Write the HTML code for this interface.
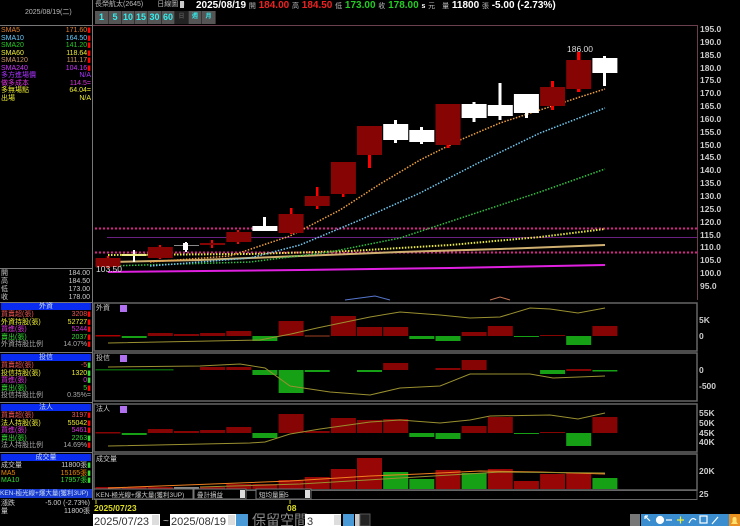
<!DOCTYPE html><html><head><meta charset="utf-8"><style>
body{margin:0;width:740px;height:526px;background:#000;overflow:hidden;position:relative;font-family:"Liberation Sans","Noto Sans CJK TC",sans-serif}
.t{position:absolute;white-space:nowrap;font-size:7px;line-height:8px}
.r{text-align:right}
.hdr{position:absolute;left:1px;width:90px;height:7px;background:#0a2cf0;color:#cde;font-size:7px;line-height:7px;text-align:center}
.btn{position:absolute;top:11px;height:13px;background:#555;color:#3ee;font-size:9px;font-weight:bold;line-height:13px;text-align:center;border-right:1px solid #333}
</style></head><body>
<!-- left panel -->
<div class="t" style="left:25px;top:9px;color:#bbb">2025/08/19(二)</div>
<div style="position:absolute;left:0;top:25px;width:92px;height:1px;background:#777"></div>
<div style="position:absolute;left:92px;top:0;width:1px;height:500px;background:#777"></div>
<div class="t" style="left:1px;top:27px;color:#e08030;line-height:7.5px">SMA5<br><span style="color:#6cf">SMA10</span><br><span style="color:#2c2">SMA20</span><br><span style="color:#ee3">SMA60</span><br><span style="color:#c96">SMA120</span><br><span style="color:#c3f">SMA240</span><br><span style="color:#a3f">多方進場價</span><br><span style="color:#d3d">做多成本</span><br><span style="color:#ee3">多無場點</span><br><span style="color:#ee3">出場</span></div>
<div class="t r" style="left:40px;width:51px;top:27px;color:#e08030;line-height:7.5px">171.60<span style="color:#f00">▮</span><br><span style="color:#6cf">164.50<span style="color:#f00">▮</span></span><br><span style="color:#2c2">141.20<span style="color:#f00">▮</span></span><br><span style="color:#ee3">118.64<span style="color:#f00">▮</span></span><br><span style="color:#c96">111.17<span style="color:#f00">▮</span></span><br><span style="color:#c3f">104.16<span style="color:#f00">▮</span></span><br><span style="color:#a3f">N/A</span><br><span style="color:#d3d">114.5=</span><br><span style="color:#ee3">64.04=</span><br><span style="color:#ee3">N/A</span></div>
<div style="position:absolute;left:0;top:268px;width:92px;height:1px;background:#777"></div>
<div class="t" style="left:1px;top:270px;color:#ccc;line-height:8px">開<br>高<br>低<br>收</div>
<div class="t r" style="left:40px;width:50px;top:270px;color:#ccc;line-height:8px">184.00<br>184.50<br>173.00<br>178.00</div>
<div style="position:absolute;left:0;top:302px;width:92px;height:1px;background:#777"></div>
<div class="hdr" style="top:303px">外資</div>
<div class="t" style="left:1px;top:311px;line-height:7.5px;color:#e55">買賣超(張)<br><span style="color:#ee3">外資持股(張)</span><br><span style="color:#d3d">買進(張)</span><br><span style="color:#3d3">賣出(張)</span><br><span style="color:#aaa">外資持股比例</span></div>
<div class="t r" style="left:40px;width:51px;top:311px;line-height:7.5px;color:#e55">3208<span style="color:#f00">▮</span><br><span style="color:#ee3">52727<span style="color:#f00">▮</span></span><br><span style="color:#d3d">5244<span style="color:#f00">▮</span></span><br><span style="color:#3d3">2037<span style="color:#f00">▮</span></span><br><span style="color:#aaa">14.07%<span style="color:#f00">▮</span></span></div>
<div style="position:absolute;left:0;top:352px;width:92px;height:1px;background:#777"></div>
<div class="hdr" style="top:354px">投信</div>
<div class="t" style="left:1px;top:362px;line-height:7.5px;color:#e55">買賣超(張)<br><span style="color:#ee3">投信持股(張)</span><br><span style="color:#d3d">買進(張)</span><br><span style="color:#3d3">賣出(張)</span><br><span style="color:#aaa">投信持股比例</span></div>
<div class="t r" style="left:40px;width:51px;top:362px;line-height:7.5px;color:#e55">-5<span style="color:#3d3">▮</span><br><span style="color:#ee3">1320<span style="color:#3d3">▮</span></span><br><span style="color:#d3d">0<span style="color:#3d3">▮</span></span><br><span style="color:#3d3">5<span style="color:#f00">▮</span></span><br><span style="color:#aaa">0.35%=</span></div>
<div style="position:absolute;left:0;top:402px;width:92px;height:1px;background:#777"></div>
<div class="hdr" style="top:404px">法人</div>
<div class="t" style="left:1px;top:412px;line-height:7.5px;color:#e55">買賣超(張)<br><span style="color:#ee3">法人持股(張)</span><br><span style="color:#d3d">買進(張)</span><br><span style="color:#3d3">賣出(張)</span><br><span style="color:#aaa">法人持股比例</span></div>
<div class="t r" style="left:40px;width:51px;top:412px;line-height:7.5px;color:#e55">3197<span style="color:#f00">▮</span><br><span style="color:#ee3">55042<span style="color:#f00">▮</span></span><br><span style="color:#d3d">5461<span style="color:#f00">▮</span></span><br><span style="color:#3d3">2263<span style="color:#3d3">▮</span></span><br><span style="color:#aaa">14.69%<span style="color:#f00">▮</span></span></div>
<div style="position:absolute;left:0;top:452px;width:92px;height:1px;background:#777"></div>
<div class="hdr" style="top:454px">成交量</div>
<div class="t" style="left:1px;top:462px;line-height:7.5px;color:#ccc">成交量<br><span style="color:#e80">MA5</span><br><span style="color:#3d3">MA10</span></div>
<div class="t r" style="left:40px;width:51px;top:462px;line-height:7.5px;color:#ccc">11800張<span style="color:#3d3">▮</span><br><span style="color:#e80">15165張<span style="color:#3d3">▮</span></span><br><span style="color:#3d3">17957張<span style="color:#3d3">▮</span></span></div>
<div class="t" style="left:0;top:489px;width:92px;height:9px;background:#1438d0;color:#cde;font-size:6.5px;line-height:9px">KEN-極光線+爆大量(獲利3UP)</div>
<div class="t" style="left:1px;top:500px;color:#ccc;line-height:8px">漲跌<br>量</div>
<div class="t r" style="left:30px;width:60px;top:500px;color:#ccc;line-height:8px">-5.00 (-2.73%)<br>11800張</div>

<!-- top header -->
<div class="t" style="left:95px;top:1px;color:#bbb;font-size:7px">長榮航太(2645)　　日線圖 <span style="background:#ccc;color:#ccc">■</span></div>
<div class="t" style="left:196px;top:0;font-size:10px;line-height:11px;font-weight:bold;color:#fff">2025/08/19 <span style="font-size:7px;color:#bbb;font-weight:normal">開</span> <span style="color:#e22">184.00</span> <span style="font-size:7px;color:#bbb;font-weight:normal">高</span> <span style="color:#e22">184.50</span> <span style="font-size:7px;color:#bbb;font-weight:normal">低</span> <span style="color:#2c2">173.00</span> <span style="font-size:7px;color:#bbb;font-weight:normal">收</span> <span style="color:#2c2">178.00</span> <span style="font-size:7px">s</span> <span style="font-size:7px;color:#bbb;font-weight:normal">元　量</span> 11800 <span style="font-size:7px;color:#bbb;font-weight:normal">張</span> -5.00 (-2.73%)</div>
<div class="btn" style="left:95px;width:13px">1</div><div class="btn" style="left:109px;width:12px">5</div><div class="btn" style="left:122px;width:12px">10</div><div class="btn" style="left:135px;width:12px">15</div><div class="btn" style="left:148px;width:13px">30</div><div class="btn" style="left:162px;width:12px">60</div><div class="btn" style="left:175px;width:13px;background:#222;color:#555;font-size:6px">日</div><div class="btn" style="left:189px;width:12px;font-size:6px">週</div><div class="btn" style="left:202px;width:13px;font-size:6px">月</div>

<svg width="740" height="526" style="position:absolute;left:0;top:0" font-family="Liberation Sans" >
<g stroke="#6a4050" fill="none"><path d="M93 25.5H697.5V300"/></g>
<g fill="#ccc" font-size="8.5" font-weight="bold">
<text x="700" y="32">195.0</text><text x="700" y="45">190.0</text><text x="700" y="58">185.0</text><text x="700" y="71">180.0</text><text x="700" y="83">175.0</text><text x="700" y="96">170.0</text><text x="700" y="109">165.0</text><text x="700" y="122">160.0</text><text x="700" y="135">155.0</text><text x="700" y="148">150.0</text><text x="700" y="160">145.0</text><text x="700" y="173">140.0</text><text x="700" y="186">135.0</text><text x="700" y="199">130.0</text><text x="700" y="212">125.0</text><text x="700" y="225">120.0</text><text x="700" y="238">115.0</text><text x="700" y="250">110.0</text><text x="700" y="263">105.0</text><text x="700" y="276">100.0</text><text x="700" y="289">95.0</text>
</g>
<!-- horizontal lines -->
<line x1="95" y1="228.5" x2="697" y2="228.5" stroke="#e0208a" stroke-width="2" stroke-dasharray="2 2"/>
<line x1="95" y1="252.5" x2="697" y2="252.5" stroke="#e0208a" stroke-width="2" stroke-dasharray="2 2"/>
<line x1="107" y1="237.5" x2="697" y2="237.5" stroke="#6a2080" stroke-width="1"/>
<!-- MAs -->
<polyline fill="none" stroke="#d0b070" stroke-width="2" points="108,262 200,260 300,256 400,252 500,249 605,245"/>
<polyline fill="none" stroke="#e020e0" stroke-width="2" points="108,272 300,270 450,268 605,265"/>
<polyline fill="none" stroke="#e8e840" stroke-width="2" stroke-dasharray="1.5 1.5" points="108,255 250,254 350,251 450,245 540,237 605,229"/>
<polyline fill="none" stroke="#30c040" stroke-width="1.5" stroke-dasharray="1.5 1.5" points="108,266 250,262 330,252 400,238 470,215 540,192 605,169"/>
<polyline fill="none" stroke="#70c8f0" stroke-width="1.5" stroke-dasharray="1.5 1.5" points="150,266 250,258 300,245 360,220 420,193 480,162 540,133 605,108"/>
<polyline fill="none" stroke="#f0a040" stroke-width="1.5" stroke-dasharray="1.5 1.5" points="150,262 230,256 290,236 340,210 380,184 420,160 460,140 500,123 540,110 580,97 605,89"/>
<!-- candles -->
<g fill="#870404">
<rect x="107" y="256" width="2" height="12" fill="#f00"/><rect x="95.5" y="258" width="25" height="9"/>
<rect x="159" y="245" width="2" height="14" fill="#f00"/><rect x="147.8" y="247" width="25" height="11"/>
<rect x="211" y="240" width="2" height="8" fill="#f00"/><rect x="200" y="243" width="25" height="2"/>
<rect x="237" y="230" width="2" height="14" fill="#f00"/><rect x="226.3" y="232" width="25" height="10"/>
<rect x="290" y="208" width="2.5" height="26" fill="#f00"/><rect x="278.6" y="214" width="25" height="19"/>
<rect x="316" y="187" width="2.5" height="22" fill="#f00"/><rect x="304.7" y="196" width="25" height="10"/>
<rect x="342" y="162" width="2.5" height="35" fill="#f00"/><rect x="330.9" y="162" width="25" height="32"/>
<rect x="368" y="126" width="3" height="42" fill="#f00"/><rect x="357" y="126" width="25" height="29"/>
<rect x="446.5" y="104" width="3" height="44" fill="#f00"/><rect x="435.5" y="104" width="25" height="41"/>
<rect x="551" y="81" width="3" height="29" fill="#f00"/><rect x="540.1" y="87" width="25" height="19"/>
<rect x="577" y="52" width="3.5" height="40" fill="#f00"/><rect x="566.2" y="60" width="25" height="29"/>
</g>
<g fill="#fff">
<rect x="133" y="250" width="2" height="12"/><rect x="121.7" y="254" width="25" height="2" fill="#ee8"/>
<rect x="185" y="242" width="2" height="10"/><rect x="174" y="245" width="25" height="1" fill="#888"/><rect x="183" y="243" width="5" height="7"/>
<rect x="263" y="217" width="3" height="14"/><rect x="252.4" y="226" width="25" height="5"/>
<rect x="394" y="120" width="3" height="23"/><rect x="383.2" y="124" width="25" height="16"/>
<rect x="420" y="127" width="3" height="17"/><rect x="409.3" y="130" width="25" height="12"/>
<rect x="472.5" y="102" width="3" height="20"/><rect x="461.6" y="104" width="25" height="14"/>
<rect x="498.5" y="83" width="3" height="37"/><rect x="487.8" y="105" width="25" height="11"/>
<rect x="525" y="94" width="3" height="24"/><rect x="513.9" y="94" width="25" height="19"/>
<rect x="603" y="56" width="3" height="30"/><rect x="592.4" y="58" width="25" height="15"/>
</g>
<text x="567" y="52" fill="#ddd" font-size="8.5">186.00</text>
<text x="96" y="272" fill="#ddd" font-size="8.5">103.50</text>
<polyline fill="none" stroke="#5577cc" points="345,300 375,296 390,300"/><polyline fill="none" stroke="#c07050" points="490,300 500,297 510,300"/>
<!-- subpanels frames -->
<g fill="none" stroke="#666" stroke-width="1.5">
<rect x="94" y="303" width="603" height="48"/>
<rect x="94" y="353" width="603" height="48"/>
<rect x="94" y="404" width="603" height="48"/>
<rect x="94" y="454" width="603" height="36"/>
</g>
<rect x="94" y="490.5" width="603" height="9" fill="none" stroke="#666"/>
<g fill="#ccc" font-size="7"><text x="96" y="310">外資</text><text x="96" y="360">投信</text><text x="96" y="411">法人</text><text x="96" y="461">成交量</text></g>
<g fill="#b070f0"><rect x="120" y="305" width="7" height="7"/><rect x="120" y="355" width="7" height="7"/><rect x="120" y="406" width="7" height="7"/></g>
<g fill="#ccc" font-size="8.5" font-weight="bold"><text x="699" y="323">5K</text><text x="699" y="339">0</text><text x="699" y="373">0</text><text x="699" y="389">-500</text><text x="699" y="416">55K</text><text x="699" y="426">50K</text><text x="699" y="436">45K</text><text x="699" y="445">40K</text><text x="699" y="474">20K</text><text x="699" y="497">25</text></g>
<!-- 外資 bars -->
<g fill="#870404">
<rect x="95.5" y="335" width="25" height="1.5" fill="#a00"/>
<rect x="147.8" y="333" width="25" height="3"/><rect x="174" y="334" width="25" height="2"/><rect x="200.1" y="333" width="25" height="3"/><rect x="226.3" y="331" width="25" height="5"/>
<rect x="278.6" y="321" width="25" height="15"/><rect x="304.7" y="335" width="25" height="2" fill="#502010"/><rect x="330.9" y="316" width="25" height="20"/><rect x="357" y="327" width="25" height="9"/><rect x="383.2" y="327" width="25" height="9"/>
<rect x="461.6" y="332" width="25" height="4"/><rect x="487.8" y="326" width="25" height="10"/><rect x="540.1" y="335" width="25" height="1"/><rect x="592.4" y="326" width="25" height="10"/>
</g>
<g fill="#16a016"><rect x="121.7" y="336" width="25" height="2"/><rect x="252.4" y="336" width="25" height="5"/><rect x="409.3" y="336" width="25" height="3"/><rect x="435.5" y="336" width="25" height="5"/><rect x="513.9" y="336" width="25" height="1"/><rect x="566.2" y="336" width="25" height="9"/></g>
<polyline fill="none" stroke="#9a9030" points="108,343 260,340 291,334 317,328 370,317 400,312 440,315 470,318 500,317 530,308 550,309 578,313 605,308"/>
<!-- 投信 bars -->
<g fill="#870404"><rect x="200.1" y="367" width="25" height="3"/><rect x="226.3" y="367" width="25" height="3"/><rect x="383.2" y="363" width="25" height="7"/><rect x="435.5" y="368" width="25" height="2"/><rect x="461.6" y="360" width="25" height="10"/><rect x="566.2" y="369" width="25" height="2"/></g>
<g fill="#16a016"><rect x="95.5" y="369" width="78" height="1.5" fill="#0a600a"/><rect x="252.4" y="370" width="25" height="5"/><rect x="278.6" y="370" width="25" height="23"/><rect x="304.7" y="370" width="25" height="2"/><rect x="357" y="370" width="25" height="2"/><rect x="540.1" y="370" width="25" height="4"/><rect x="592.4" y="370" width="25" height="1.5"/></g>
<polyline fill="none" stroke="#9a9030" points="108,367 200,366 240,364 265,368 290,386 330,392 370,395 400,388 440,386 470,374 530,374 553,378 605,376"/>
<!-- 法人 bars -->
<g fill="#870404"><rect x="95.5" y="432" width="25" height="1.5"/><rect x="147.8" y="429" width="25" height="4"/><rect x="174" y="431" width="25" height="2"/><rect x="200.1" y="430" width="25" height="3"/><rect x="226.3" y="427" width="25" height="6"/><rect x="278.6" y="414" width="25" height="19"/><rect x="304.7" y="431" width="25" height="2"/><rect x="330.9" y="418" width="25" height="15"/><rect x="357" y="420" width="25" height="13"/><rect x="383.2" y="419" width="25" height="14"/><rect x="461.6" y="426" width="25" height="7"/><rect x="487.8" y="417" width="25" height="16"/><rect x="540.1" y="432" width="25" height="1"/><rect x="592.4" y="417" width="25" height="16"/></g>
<g fill="#16a016"><rect x="121.7" y="433" width="25" height="2"/><rect x="252.4" y="433" width="25" height="5"/><rect x="409.3" y="433" width="25" height="4"/><rect x="435.5" y="433" width="25" height="6"/><rect x="513.9" y="433" width="25" height="1"/><rect x="566.2" y="433" width="25" height="13"/></g>
<polyline fill="none" stroke="#9a9030" points="108,446 250,443 265,442 290,434 320,429 370,422 400,420 440,423 470,420 490,416 550,415 578,419 605,413"/>
<!-- volume -->
<g fill="#990606"><rect x="95.5" y="487" width="25" height="2"/><rect x="121.7" y="487" width="25" height="2"/><rect x="147.8" y="487" width="25" height="2"/><rect x="200.1" y="487" width="25" height="2"/><rect x="226.3" y="484" width="25" height="5"/><rect x="252.4" y="484" width="25" height="5"/><rect x="278.6" y="480" width="25" height="9"/><rect x="304.7" y="477" width="25" height="12"/><rect x="330.9" y="469" width="25" height="20"/><rect x="357" y="458" width="25" height="31"/><rect x="435.5" y="470" width="25" height="19"/><rect x="487.8" y="469" width="25" height="20"/><rect x="513.9" y="481" width="25" height="8"/><rect x="540.1" y="474" width="25" height="15"/><rect x="566.2" y="473" width="25" height="16"/></g>
<rect x="174" y="487" width="25" height="2" fill="#888"/>
<g fill="#16a016"><rect x="383.2" y="472" width="25" height="17"/><rect x="409.3" y="479" width="25" height="10"/><rect x="461.6" y="473" width="25" height="16"/><rect x="592.4" y="478" width="25" height="11"/></g>
<polyline fill="none" stroke="#f08020" points="108,488 290,481 370,476 420,474 480,471 540,472 605,474"/>
<polyline fill="none" stroke="#9a9030" points="200,487 300,484 400,478 500,472 605,473"/>
<!-- controls row -->
<rect x="94" y="489" width="99" height="10" fill="#000" stroke="#777"/>
<text x="96" y="497" fill="#ccc" font-size="6.5">KEN-極光線+爆大量(獲利3UP)</text>
<rect x="194" y="489" width="52" height="10" fill="#000" stroke="#777"/><text x="197" y="497" fill="#ccc" font-size="6.5">疊計損益</text><rect x="240" y="490" width="5" height="8" fill="#ddd"/>
<rect x="256" y="489" width="55" height="10" fill="#000" stroke="#777"/><text x="259" y="497" fill="#ccc" font-size="6.5">短均量圖5</text><rect x="305" y="490" width="5" height="8" fill="#ddd"/>
<line x1="96" y1="500" x2="96" y2="504" stroke="#cc0"/><line x1="290" y1="500" x2="290" y2="504" stroke="#cc0"/>
<text x="94" y="511" fill="#dd2" font-size="8.5" font-weight="bold">2025/07/23</text><text x="287" y="511" fill="#dd2" font-size="8.5" font-weight="bold">08</text>
<!-- bottom inputs -->
<rect x="93" y="514" width="67" height="12" fill="#fff"/><text x="94" y="525" fill="#333" font-size="11">2025/07/23</text><rect x="152" y="515" width="7" height="10" fill="#ddd"/>
<text x="163" y="524" fill="#ccc" font-size="10">~</text>
<rect x="170" y="514" width="66" height="12" fill="#fff"/><text x="171" y="525" fill="#333" font-size="11">2025/08/19</text><rect x="228" y="515" width="7" height="10" fill="#ddd"/>
<rect x="236" y="514" width="12" height="12" fill="#4a9ad8"/>
<text x="252" y="525" fill="#888" font-size="14" font-family="Noto Sans CJK TC">保留空間</text>
<rect x="305" y="514" width="36" height="12" fill="#fff"/><text x="307" y="525" fill="#333" font-size="11">3</text><rect x="334" y="515" width="7" height="10" fill="#ddd"/>
<rect x="343" y="514" width="11" height="12" fill="#4a9ad8"/><rect x="355" y="514" width="5" height="12" fill="#ccc"/>
<rect x="360" y="514" width="10" height="12" fill="#222" stroke="#555"/>
<rect x="630" y="514" width="10" height="12" fill="#777"/>
<rect x="641" y="514" width="88" height="12" fill="#3a8ed0"/>
<rect x="729" y="514" width="11" height="12" fill="#e89020"/>
<g stroke="#fff" stroke-width="1.2" fill="none"><path d="M645 516l5 5M645 516v3M645 516h3"/><circle cx="660" cy="520" r="3.5" fill="#fff"/><path d="M666 520h6"/><path d="M677 520h7M680.5 516.5v7" stroke="#ee3"/><path d="M689 523q3-7 7-3"/><rect x="700" y="516" width="7" height="7"/><path d="M712 524l6-7"/></g>
<path d="M731 524h7l-1.5-2v-3a2 2 0 0 0-4 0v3z" fill="#ffe070"/>
</svg>
</body></html>
